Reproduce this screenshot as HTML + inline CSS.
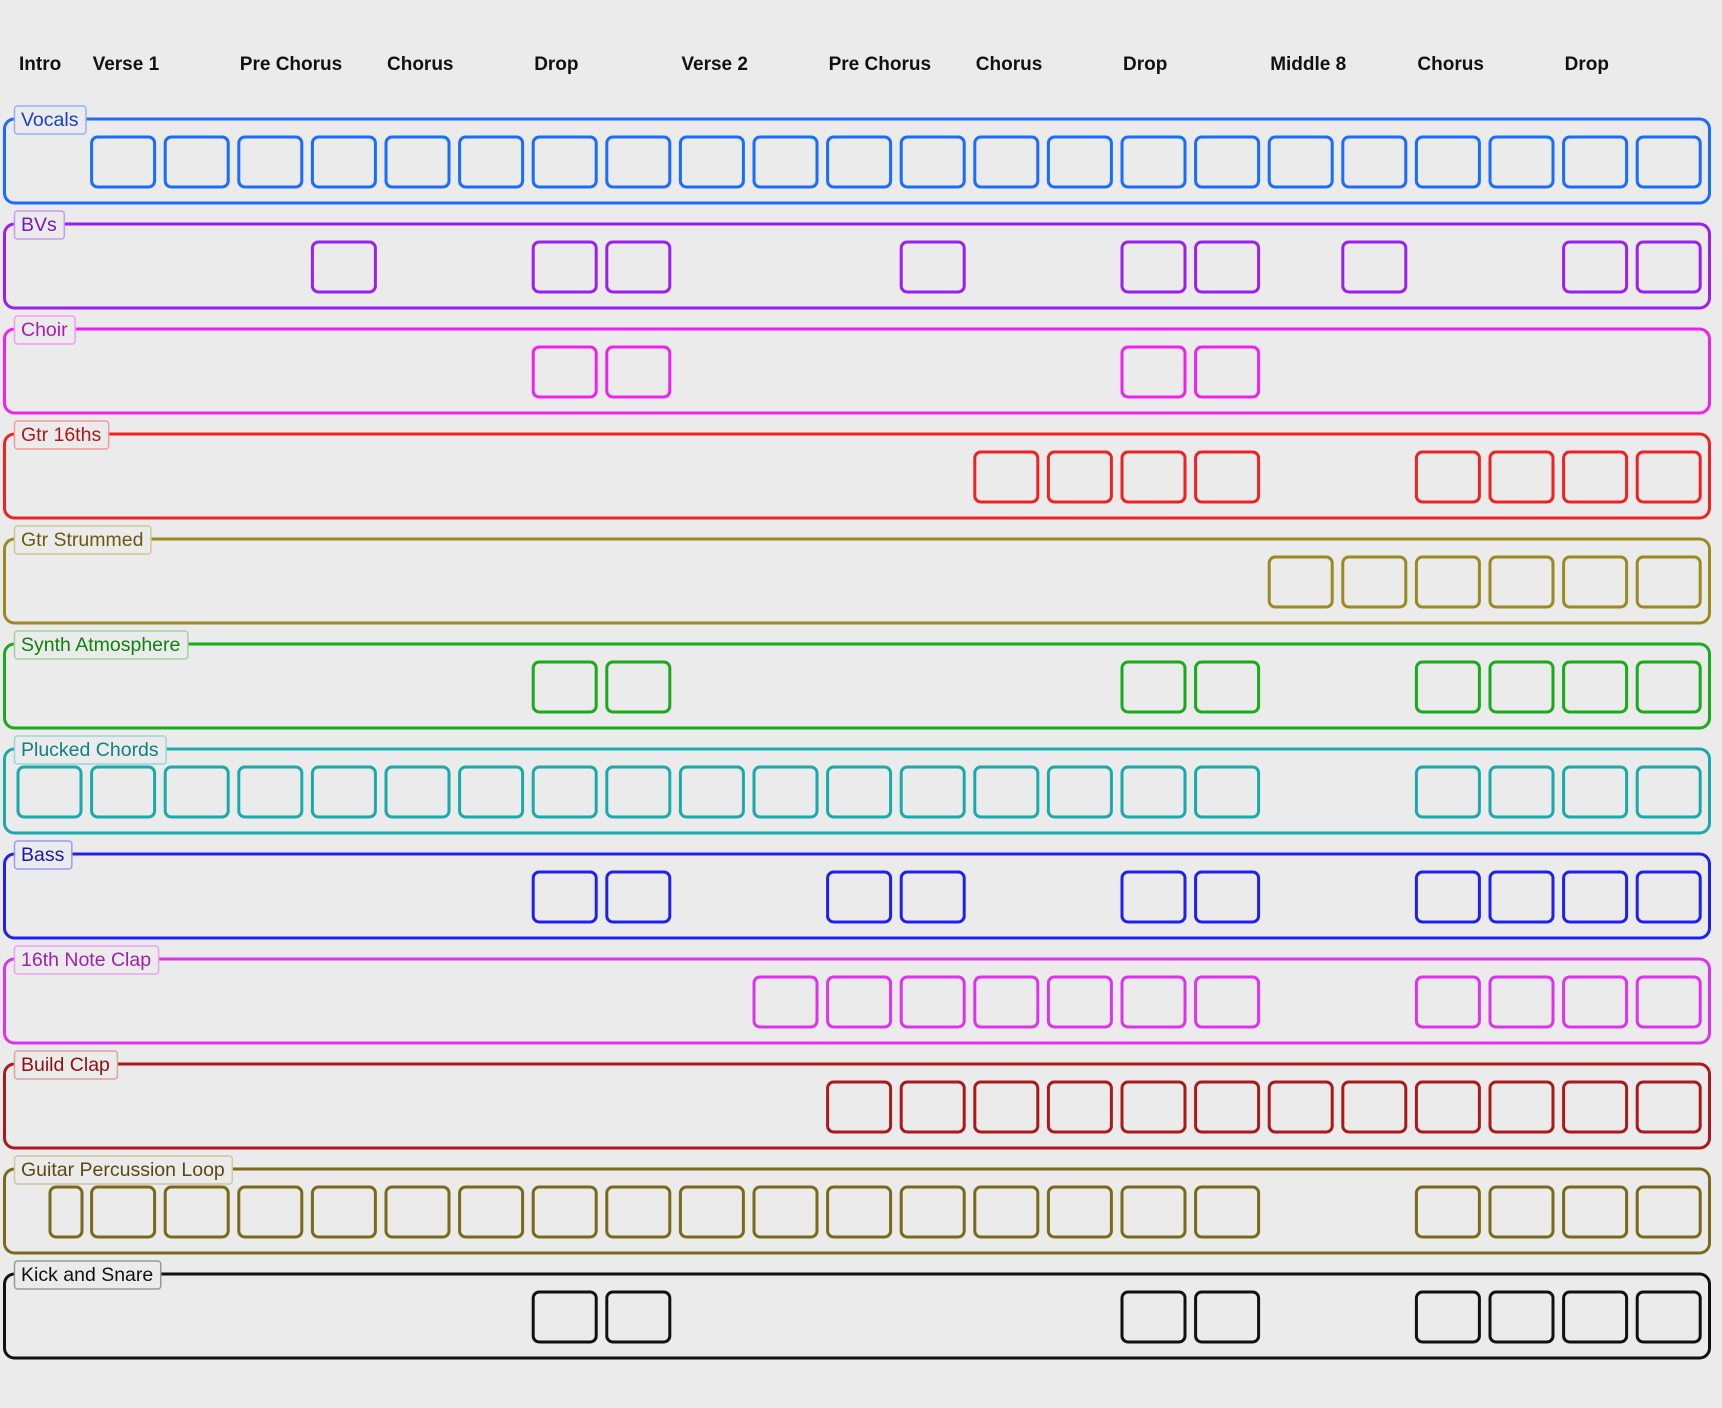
<!DOCTYPE html>
<html><head><meta charset="utf-8"><style>
html,body{margin:0;padding:0;background:#ebebeb;}
svg{display:block;}
.h{font-family:"Liberation Sans",sans-serif;font-weight:bold;font-size:19px;fill:#111;}
.l{font-family:"Liberation Sans",sans-serif;font-size:19.5px;}
</style></head><body>
<svg id="s" width="1722" height="1408" xmlns="http://www.w3.org/2000/svg">
<rect width="1722" height="1408" fill="#ebebeb"/>
</svg>
<script>
const s=document.getElementById('s');const NS='http://www.w3.org/2000/svg';
function el(t,a,txt){const e=document.createElementNS(NS,t);for(const k in a)e.setAttribute(k,a[k]);if(txt)e.textContent=txt;s.appendChild(e);return e;}
const cx=i=>18+73.6*i;
const heads=[[0,'Intro'],[1,'Verse 1'],[3,'Pre Chorus'],[5,'Chorus'],[7,'Drop'],[9,'Verse 2'],[11,'Pre Chorus'],[13,'Chorus'],[15,'Drop'],[17,'Middle 8'],[19,'Chorus'],[21,'Drop']];
heads.forEach(([i,t])=>el('text',{x:i==0?19:cx(i)+1,y:70,class:'h'},t));
const r=(a,b)=>{const o=[];for(let i=a;i<=b;i++)o.push(i);return o;};
const lanes=[
['Vocals','#1a6cff','#1a40c0','#8fb4ff',r(1,22)],
['BVs','#9a1ff0','#7a18c0','#c99af5',[4,7,8,12,15,16,18,21,22]],
['Choir','#ee22ee','#b018b0','#f39af3',[7,8,15,16]],
['Gtr 16ths','#ee2222','#b01818','#f39a9a',[13,14,15,16,19,20,21,22]],
['Gtr Strummed','#9a8a20','#6a5a10','#d0c890',r(17,22)],
['Synth Atmosphere','#1aaa1a','#108010','#9ad89a',[7,8,15,16,19,20,21,22]],
['Plucked Chords','#1aaaaa','#108080','#9ad8d8',r(0,16).concat([19,20,21,22])],
['Bass','#2020ee','#1818b0','#9a9af3',[7,8,11,12,15,16,19,20,21,22]],
['16th Note Clap','#dd33ee','#a020b0','#eea0f3',r(10,16).concat([19,20,21,22])],
['Build Clap','#aa1a1a','#901010','#e0a0a0',r(11,22)],
['Guitar Percussion Loop','#7a6a1a','#5a4a10','#d0c8a0',r(1,16).concat([19,20,21,22])],
['Kick and Snare','#111111','#111111','#999999',[7,8,15,16,19,20,21,22]]];
lanes.forEach(([name,c,tc,lc,cells],k)=>{
 const y=119+105*k;
 el('rect',{x:4.5,y:y,width:1705,height:84,rx:10,fill:'none',stroke:c,'stroke-width':3});
 cells.forEach(i=>el('rect',{x:cx(i),y:y+18,width:63,height:50,rx:6,fill:'none',stroke:c,'stroke-width':3}));
 if(k==10) el('rect',{x:50,y:y+18,width:32,height:50,rx:6,fill:'none',stroke:c,'stroke-width':3});
 const t=el('text',{x:21,y:y+7,class:'l',fill:tc},name);
 const w=t.getComputedTextLength();
 const b=el('rect',{x:14.5,y:y-13,width:w+14,height:28,rx:3,fill:'#ebebeb',stroke:lc,'stroke-width':1.5});
 s.insertBefore(b,t);
});
</script>
</body></html>
